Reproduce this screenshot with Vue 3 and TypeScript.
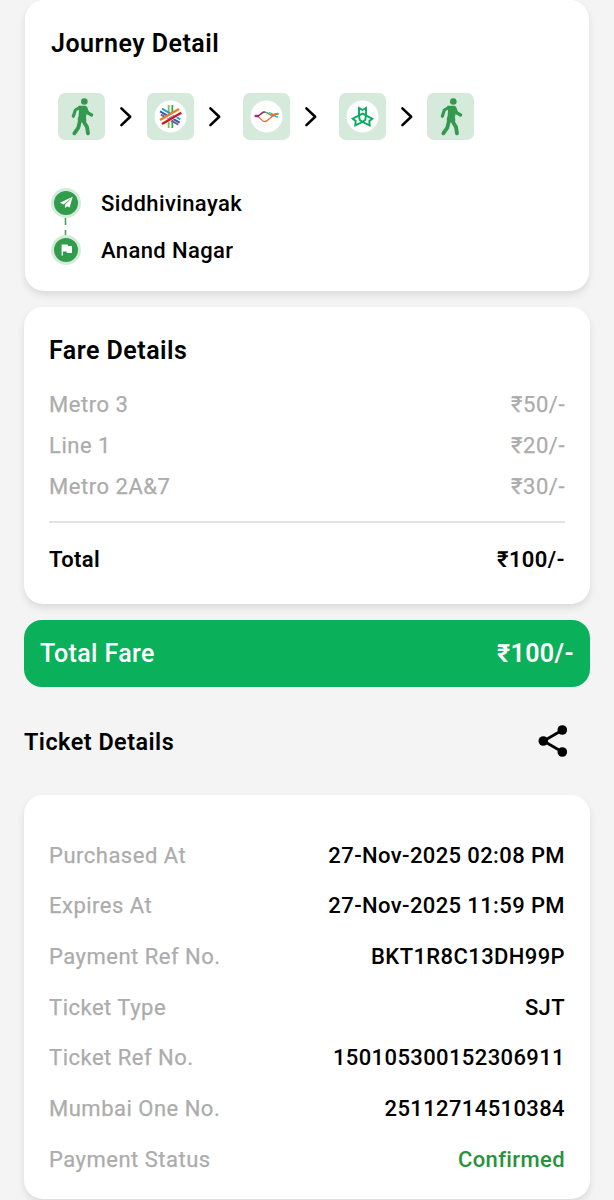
<script setup lang="ts">
type Stop = 'walk' | 'aqua' | 'line1' | 'mmmocl'

interface Row {
  label: string
  value: string
  confirmed?: boolean
}

const stops: Stop[] = ['walk', 'aqua', 'line1', 'mmmocl', 'walk']

const fares: Row[] = [
  { label: 'Metro 3', value: '₹50/-' },
  { label: 'Line 1', value: '₹20/-' },
  { label: 'Metro 2A&7', value: '₹30/-' },
]

const details: Row[] = [
  { label: 'Purchased At', value: '27-Nov-2025 02:08 PM' },
  { label: 'Expires At', value: '27-Nov-2025 11:59 PM' },
  { label: 'Payment Ref No.', value: 'BKT1R8C13DH99P' },
  { label: 'Ticket Type', value: 'SJT' },
  { label: 'Ticket Ref No.', value: '150105300152306911' },
  { label: 'Mumbai One No.', value: '25112714510384' },
  { label: 'Payment Status', value: 'Confirmed', confirmed: true },
]
</script>

<template>
  <main class="page">
    <section class="card journey">
      <h2 class="title">Journey Detail</h2>
      <div class="route">
        <template v-for="(stop, i) in stops" :key="i">
          <svg v-if="i > 0" class="chevron" viewBox="0 0 42 47">
            <path d="M16.6 15.3 25.5 23.8 16.6 32.3" />
          </svg>
          <div class="tile" :class="{ spaced: i === 2 || i === 3 }">
            <svg v-if="stop === 'walk'" class="glyph" viewBox="0 0 141 141">
              <circle cx="79" cy="25.500" r="10" fill="#35984f" />
              <path d="M61 38 H83 Q89 40 89 49 L84 72 Q86 84 84 88 L61 86 Q57 80 62 68 L63 54 Z" fill="#35984f" />
              <g fill="none" stroke="#35984f" stroke-width="9.500" stroke-linecap="round" stroke-linejoin="round">
                <path d="M66 43 L52 51 L46 70" />
                <path d="M83 46 L90 60 L101 66" />
              </g>
              <g fill="none" stroke="#35984f" stroke-width="11.500" stroke-linecap="round" stroke-linejoin="round">
                <path d="M66 83 L61 104 L49 121" />
                <path d="M76 84 L87 102 L90 121" />
              </g>
            </svg>
            <svg v-else class="glyph" viewBox="0 0 141 141">
              <circle cx="70.500" cy="70.500" r="48" fill="#fff" />
              <g v-if="stop === 'aqua'" fill="none" stroke-width="5.500">
                <path d="M65 36V105" stroke="#83c341" />
                <path d="M76 36V105" stroke="#2fae54" />
                <path d="M45 47 100 79" stroke="#1ca3dc" />
                <path d="M39 55 98 89" stroke="#3c57a6" />
                <path d="M42 65 94 95" stroke="#8255a3" />
                <path d="M41 83 96 51" stroke="#fff" stroke-width="9" />
                <path d="M46 93 103 60" stroke="#fff" stroke-width="9" />
                <path d="M39 81 96 48" stroke="#ef7d22" stroke-width="7" />
                <path d="M45 93 103 59" stroke="#d4151f" stroke-width="7" />
              </g>
              <g v-else-if="stop === 'line1'" fill="none" stroke-width="4">
                <path d="M44 69C54 67 54 57 64 57C79 59 81 69 91 69C97 66 99 62 107 63" stroke="#63a447" />
                <path d="M42 70C54 72 54 85 65 86C77 85 82 66 105 61" stroke="#f06b32" />
                <path d="M78 59C92 60 92 72 105 72" stroke="#2ab4df" />
                <path d="M84 66C94 64 97 62 106 61" stroke="#ed6a38" />
                <path d="M44 69C54 67 54 57 65 57" stroke="#a72785" stroke-width="4.500" />
                <path d="M35 69H48" stroke="#bd1787" stroke-width="7" />
              </g>
              <g v-else fill="none" stroke="#0aac62" stroke-width="5.800" stroke-linejoin="miter">
                <path d="M60 67V45L70.500 51 81 45V67" />
                <path d="M61 67 41 77 50 84 49 97 70 87" />
                <path d="M80 67 100 77 91 84 92 97 71 87" />
                <path d="M60 67 70.500 62 81 67 79 80 70.500 87 62 80Z" />
              </g>
            </svg>
          </div>
        </template>
      </div>
      <div class="stations">
        <div class="station">
          <svg class="pin" viewBox="0 0 30 30">
            <circle cx="15" cy="15" r="15" fill="#d5eadb" />
            <circle cx="15" cy="15" r="12" fill="#319c4b" />
            <path d="M21.700 8.800 8.800 14.800 12.800 16.400ZM21.700 8.800 13.900 17.100 14.200 20.200 16 18.200 18.600 19.500Z" fill="#fff" />
          </svg>
          <span class="name">Siddhivinayak</span>
        </div>
        <svg class="link" viewBox="0 0 30 17"><path d="M14.500 0V7M14.500 12V17" /></svg>
        <div class="station">
          <svg class="pin" viewBox="0 0 30 30">
            <circle cx="15" cy="15" r="15" fill="#d5eadb" />
            <circle cx="15" cy="15" r="12" fill="#319c4b" />
            <path d="M10.600 9.500H16.500L17 11H21V18.100H16L15.500 16.600H12V20.500H10.600Z" fill="#fff" />
          </svg>
          <span class="name">Anand Nagar</span>
        </div>
      </div>
    </section>

    <section class="card fare">
      <h2 class="title">Fare Details</h2>
      <div v-for="row in fares" :key="row.label" class="row fare-row">
        <span>{{ row.label }}</span><span>{{ row.value }}</span>
      </div>
      <div class="row total"><span>Total</span><span>₹100/-</span></div>
    </section>

    <section class="banner"><span>Total Fare</span><span class="amount">₹100/-</span></section>

    <header class="ticket-head">
      <h2 class="title">Ticket Details</h2>
      <svg class="share" viewBox="0 0 32 34">
        <path d="M25.500 6 6.500 17 25.500 28" fill="none" stroke="#000" stroke-width="2.800" />
        <g fill="#000">
          <circle cx="25.300" cy="6" r="4.800" /><circle cx="6.300" cy="17" r="4.800" /><circle cx="25.300" cy="28" r="4.800" />
        </g>
      </svg>
    </header>

    <section class="card details">
      <div v-for="row in details" :key="row.label" class="row detail-row">
        <span class="label">{{ row.label }}</span>
        <span :class="{ confirmed: row.confirmed }">{{ row.value }}</span>
      </div>
    </section>
  </main>
</template>

<style>
body {
  background: #f4f4f4;
}
</style>

<style scoped>
.page {
  box-sizing: border-box;
  height: 1200px;
  overflow: hidden;
  padding: 0 24px;
  background: #f4f4f4;
  color: #000;
  font: 500 22px/30px Roboto, sans-serif;
  letter-spacing: 0.39px;
}
.card {
  box-sizing: border-box;
  background: #fff;
  border-radius: 19px;
  box-shadow: 0 4px 7px rgba(0, 0, 0, 0.1);
}
.title {
  margin: 0;
  font-size: 25px;
  font-weight: 600;
  line-height: 31px;
  letter-spacing: 0.48px;
}
.journey {
  height: 291px;
  margin: 0 1px;
  padding: 28px 26px 0;
}
.route {
  display: flex;
  padding: 34px 0 0 7px;
}
.tile {
  width: 47px;
  height: 47px;
  border-radius: 7px;
  background: #d6eadc;
}
.tile.spaced {
  margin-left: 7.5px;
}
.glyph {
  display: block;
  width: 47px;
  height: 47px;
}
.chevron {
  width: 41.5px;
  height: 47px;
  fill: none;
  stroke: #000;
  stroke-width: 2.6;
  stroke-linecap: round;
  stroke-linejoin: round;
}
.stations {
  padding-top: 48px;
}
.station {
  display: flex;
  align-items: center;
  height: 30px;
  gap: 20px;
}
.name {
  line-height: 30px;
  padding-top: 2px;
}
.pin {
  width: 30px;
  height: 30px;
}
.link {
  display: block;
  width: 30px;
  height: 17px;
  stroke: #43a45b;
  stroke-width: 1.6;
}
.fare {
  height: 297px;
  margin-top: 16px;
  padding: 28px 25px 0;
}
.fare .title {
  margin-bottom: 18px;
}
.row {
  display: flex;
  justify-content: space-between;
}
.fare-row {
  height: 41px;
  line-height: 41px;
  color: #acacac;
  font-weight: 400;
  letter-spacing: 0.53px;
  -webkit-text-stroke: 0.25px #acacac;
}
.total {
  margin-top: 14px;
  padding-top: 22px;
  border-top: 2px solid #e2e2e2;
  font-weight: 600;
}
.banner {
  display: flex;
  justify-content: space-between;
  height: 67px;
  margin-top: 16px;
  padding: 0 16px;
  border-radius: 18px;
  background: #0bb05b;
  color: #fff;
  font-size: 25px;
  line-height: 68px;
}
.amount {
  font-weight: 600;
}
.ticket-head {
  display: flex;
  align-items: center;
  justify-content: space-between;
  height: 108px;
  padding-right: 21px;
}
.ticket-head .title {
  padding-top: 2px;
  font-size: 23.4px;
}
.share {
  width: 32px;
  height: 34px;
}
.details {
  height: 404px;
  padding: 35.7px 25px 0;
}
.detail-row {
  height: 50.7px;
  line-height: 50.7px;
}
.label {
  color: #acacac;
  font-weight: 400;
  letter-spacing: 0.5px;
  -webkit-text-stroke: 0.25px #acacac;
}
.confirmed {
  color: #2a913d;
}
</style>
